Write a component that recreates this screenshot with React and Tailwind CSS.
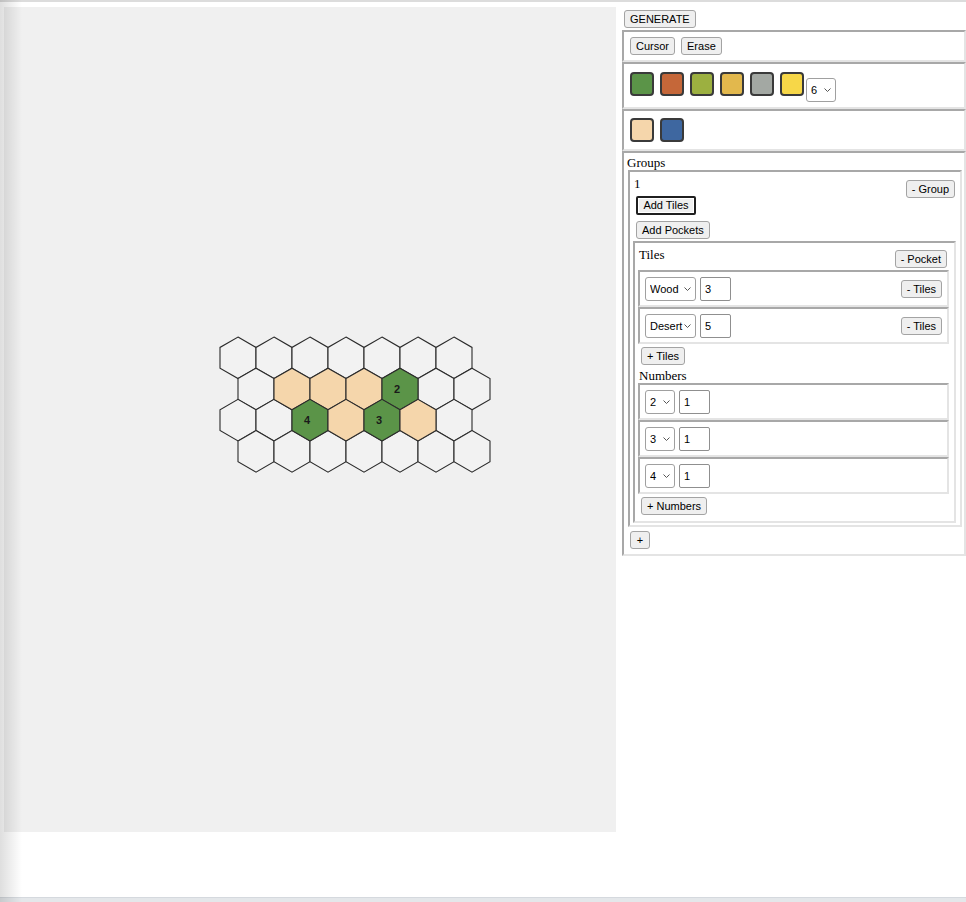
import React from "react";

const R = 20.78;
const tan = "#f5d6ab";
const green = "#5b9448";

function hexPoints(cx, cy) {
  const h = R / 2;
  return [
    [cx, cy - R],
    [cx + 18, cy - h],
    [cx + 18, cy + h],
    [cx, cy + R],
    [cx - 18, cy + h],
    [cx - 18, cy - h],
  ]
    .map((p) => p[0].toFixed(2) + "," + p[1].toFixed(2))
    .join(" ");
}

const special = {
  "1-1": { fill: tan },
  "1-2": { fill: tan },
  "1-3": { fill: tan },
  "1-4": { fill: green, label: "2" },
  "2-2": { fill: green, label: "4" },
  "2-3": { fill: tan },
  "2-4": { fill: green, label: "3" },
  "2-5": { fill: tan },
};

function HexBoard() {
  const ox = 4;
  const oy = 7;
  const cells = [];
  for (let i = 0; i < 4; i++) {
    for (let j = 0; j < 7; j++) {
      const cx = 238 + (i % 2 ? 18 : 0) + j * 36 - ox;
      const cy = 357.8 + i * 31.18 - oy;
      const s = special[i + "-" + j];
      cells.push({ key: i + "-" + j, cx, cy, s });
    }
  }
  const plain = cells.filter((c) => !c.s);
  const colored = cells.filter((c) => c.s);
  return (
    <svg width="612" height="825" className="block">
      {plain.map((c) => (
        <polygon key={c.key} points={hexPoints(c.cx, c.cy)} fill="#f2f2f2" stroke="#2b2b2b" strokeWidth="1.1" />
      ))}
      {colored.map((c) => (
        <g key={c.key}>
          <polygon points={hexPoints(c.cx, c.cy)} fill={c.s.fill} stroke="#2b2b2b" strokeWidth="1.1" />
          {c.s.label && (
            <text
              x={c.cx - 3}
              y={c.cy + 4}
              textAnchor="middle"
              fontFamily="Liberation Sans, Arial, sans-serif"
              fontWeight="bold"
              fontSize="11"
              fill="#1a1a1a"
            >
              {c.s.label}
            </text>
          )}
        </g>
      ))}
    </svg>
  );
}

function Btn({ children, className = "" }) {
  return (
    <button
      className={
        "block h-[18px] px-[5px] border border-[#a3a3a3] rounded-[3px] bg-[#efefef] text-[11px] leading-none text-black font-['Liberation_Sans',Arial,sans-serif] whitespace-nowrap " +
        className
      }
    >
      {children}
    </button>
  );
}

function Box({ children, className = "" }) {
  return (
    <div
      className={
        "border-2 border-t-[#a8a8a8] border-l-[#a8a8a8] border-r-[#e4e4e4] border-b-[#e4e4e4] " + className
      }
    >
      {children}
    </div>
  );
}

function Sel({ value, w }) {
  return (
    <div className={"relative flex h-[24px] " + w}>
      <select
        defaultValue={value}
        className="block appearance-none w-full h-full border border-[#a0a0a0] rounded-[3px] bg-white pl-[4px] text-[11px] text-black font-['Liberation_Sans',Arial,sans-serif] outline-none"
      >
        <option>{value}</option>
      </select>
      <svg className="absolute right-[5px] top-[10px] pointer-events-none" width="7" height="4" viewBox="0 0 7 4">
        <path d="M0.5 0.5 L3.5 3.5 L6.5 0.5" fill="none" stroke="#555" strokeWidth="1" />
      </svg>
    </div>
  );
}

function Inp({ value }) {
  return (
    <input
      defaultValue={value}
      className="block ml-[4px] w-[31px] h-[24px] border border-[#8f8f8f] rounded-[2px] bg-white pl-[4px] text-[11px] text-black font-['Liberation_Sans',Arial,sans-serif] outline-none"
    />
  );
}

function Swatch({ color }) {
  return <div className={"w-[24px] h-[24px] rounded-[4px] border-2 border-[#3a3a3a] " + color} />;
}

const serif = "block font-['Liberation_Serif','Times_New_Roman',serif] text-[13px] leading-[15px] text-black";

export default function App() {
  return (
    <div className="relative h-[902px] flex flex-col bg-white overflow-hidden">
      <div className="h-[2px] bg-[#dcdcdc]" />
      <div className="flex items-start">
        <div className="mt-[5px] ml-[4px] w-[612px] h-[825px] bg-[#f0f0f0]">
          <HexBoard />
        </div>
        <div className="ml-[6px] flex-1 pt-[8px] flex flex-col">
          <div className="flex">
            <Btn className="ml-[2px]">GENERATE</Btn>
          </div>
          <Box className="mt-[2px] pl-[6px] pt-[5px] pb-[5px] flex gap-[6px]">
            <Btn>Cursor</Btn>
            <Btn>Erase</Btn>
          </Box>
          <Box className="pl-[6px] pt-[8px] pb-[5px] flex items-start">
            <div className="flex gap-[6px]">
              <Swatch color="bg-[#5b9448]" />
              <Swatch color="bg-[#c56739]" />
              <Swatch color="bg-[#9cb040]" />
              <Swatch color="bg-[#e2b84d]" />
              <Swatch color="bg-[#a3a8a3]" />
              <Swatch color="bg-[#f7d748]" />
            </div>
            <div className="ml-[2px] mt-[6px] flex">
              <Sel value="6" w="w-[30px]" />
            </div>
          </Box>
          <Box className="pl-[6px] pt-[7px] pb-[7px] flex gap-[6px]">
            <Swatch color="bg-[#f5d6ab]" />
            <Swatch color="bg-[#3e67a0]" />
          </Box>
          <Box className="pb-[5px]">
            <div className={"pl-[3px] pt-[2px] " + serif}>Groups</div>
            <Box className="ml-[4px] mr-[2px] pl-[4px] pr-[5px] pt-[4px] pb-[2px]">
              <div className="flex justify-between items-start h-[20px]">
                <span className={serif}>1</span>
                <Btn className="mt-[4px]">- Group</Btn>
              </div>
              <div className="flex">
                <button className="block ml-[2px] w-[60px] h-[19px] border-2 border-[#1f1f1f] rounded-[2px] bg-[#efefef] shadow-[inset_0_0_0_1px_#ffffff] text-[11px] leading-none text-black font-['Liberation_Sans',Arial,sans-serif]">
                  Add Tiles
                </button>
              </div>
              <div className="mt-[6px] flex">
                <Btn className="ml-[2px]">Add Pockets</Btn>
              </div>
              <Box className="mt-[2px] mx-[-1px] pb-[6px]">
                <div className="flex justify-between items-start pl-[4px] pr-[7px] pt-[4px]">
                  <span className={serif}>Tiles</span>
                  <Btn className="mt-[3px]">- Pocket</Btn>
                </div>
                <div className="mt-[2px] ml-[3px] mr-[5px]">
                  {[
                    ["Wood", "3"],
                    ["Desert", "5"],
                  ].map(([t, n]) => (
                    <Box key={t} className="pl-[5px] pr-[5px] pt-[5px] pb-[4px] flex items-center">
                      <Sel value={t} w="w-[51px]" />
                      <Inp value={n} />
                      <Btn className="ml-auto">- Tiles</Btn>
                    </Box>
                  ))}
                </div>
                <div className="mt-[3px] ml-[6px] flex">
                  <Btn>+ Tiles</Btn>
                </div>
                <div className={"mt-[3px] pl-[4px] " + serif}>Numbers</div>
                <div className="ml-[3px] mr-[5px]">
                  {["2", "3", "4"].map((v) => (
                    <Box key={v} className="pl-[5px] pr-[5px] pt-[5px] pb-[4px] flex items-center">
                      <Sel value={v} w="w-[30px]" />
                      <Inp value="1" />
                    </Box>
                  ))}
                </div>
                <div className="mt-[3px] ml-[6px] flex">
                  <Btn>+ Numbers</Btn>
                </div>
              </Box>
            </Box>
            <div className="mt-[4px] ml-[6px] flex">
              <Btn className="w-[20px] px-0 text-center">+</Btn>
            </div>
          </Box>
        </div>
      </div>
      <div className="mt-auto h-[5px] bg-[#e4e7ea] border-t border-[#d5d9de]" />
      <div className="absolute left-0 top-0 bottom-0 w-[22px] pointer-events-none bg-linear-to-r from-[rgba(0,0,0,0.13)] to-transparent" />
    </div>
  );
}
